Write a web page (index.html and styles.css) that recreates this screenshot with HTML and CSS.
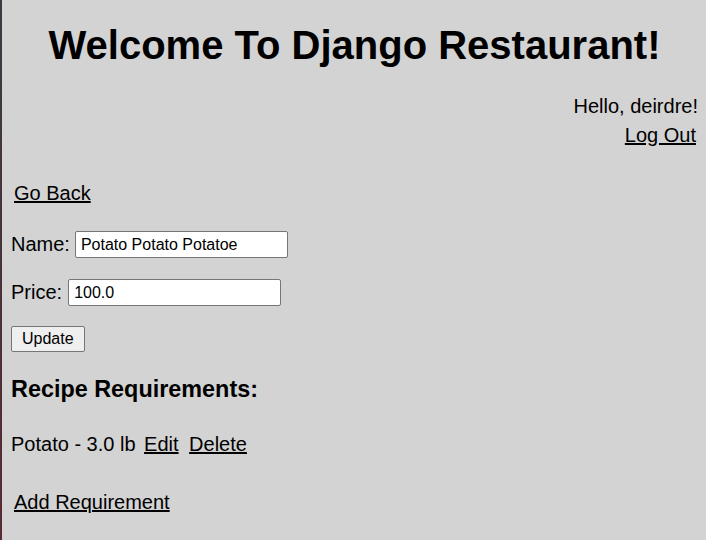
FILE: index.html
```html
<!DOCTYPE html>
<html>
<head>
<meta charset="utf-8">
<title>Django Restaurant</title>
<link rel="stylesheet" href="styles.css">
</head>
<body>
<div class="page">
  <h1 class="title">Welcome To Django Restaurant!</h1>
  <div class="user">
    <div class="hello">Hello, deirdre!</div>
    <a class="logout" href="#">Log Out</a>
  </div>
  <a class="link back" href="#">Go Back</a>
  <form class="form">
    <label class="row">Name: <input class="field name-field" type="text" value="Potato Potato Potatoe"></label>
    <label class="row price-row">Price: <input class="field price-field" type="text" value="100.0"></label>
    <button class="btn" type="button">Update</button>
  </form>
  <h3 class="sub">Recipe Requirements:</h3>
  <div class="req">Potato - 3.0 lb <a class="edit" href="#">Edit</a> <a class="del" href="#">Delete</a></div>
  <a class="link add" href="#">Add Requirement</a>
</div>
</body>
</html>
```
FILE: styles.css
```css
html, body {
  margin: 0;
  padding: 0;
  height: 100%;
  background: #d3d3d3;
}
body {
  border-left: 2px solid #3c3c44;
  border-image: linear-gradient(#3a3b44, #4a3038 60%, #5a2a33) 1;
  box-sizing: border-box;
  font-family: "Liberation Sans", Arial, sans-serif;
  color: #000;
}
.page {
  display: flex;
  flex-direction: column;
  align-items: flex-start;
  padding: 0 8px 0 9px;
}
a { color: #000; }
.title {
  align-self: stretch;
  text-align: center;
  font-size: 40px;
  line-height: 46px;
  margin: 22px 0 0 0;
  font-weight: bold;
}
.user {
  align-self: stretch;
  display: flex;
  flex-direction: column;
  align-items: flex-end;
  font-size: 20px;
  line-height: 23px;
  margin-top: 27px;
}
.logout { margin-top: 6px; margin-right: 2px; }
.link {
  font-size: 20px;
  line-height: 23px;
  padding-left: 3px;
}
.back { margin-top: 35px; }
.form {
  display: flex;
  flex-direction: column;
  align-items: flex-start;
  margin: 0;
}
.row {
  font-size: 20px;
  line-height: 23px;
  display: flex;
  align-items: center;
  gap: 5px;
}
.price-row { gap: 6px; }
.row:first-child { margin-top: 26px; }
.row + .row { margin-top: 21px; }
.field {
  font-family: "Liberation Sans", Arial, sans-serif;
  font-size: 16px;
  width: 213px;
  height: 27px;
  box-sizing: border-box;
  border: 1px solid #767676;
  border-radius: 2px;
  padding: 1px 5px;
  background: #fff;
  margin: 0;
}
.btn {
  font-family: "Liberation Sans", Arial, sans-serif;
  font-size: 16px;
  height: 26px;
  padding: 0 10px;
  margin-top: 20px;
  border: 1px solid #767676;
  border-radius: 2px;
  background: #efefef;
  color: #000;
}
.sub {
  font-size: 23.4px;
  line-height: 27px;
  margin: 24px 0 0 0;
  font-weight: bold;
}
.req {
  font-size: 20px;
  line-height: 23px;
  margin-top: 30px;
}
.req .edit { margin-left: 3px; }
.req .del { margin-left: 5px; }
.add { margin-top: 35px; }
```
